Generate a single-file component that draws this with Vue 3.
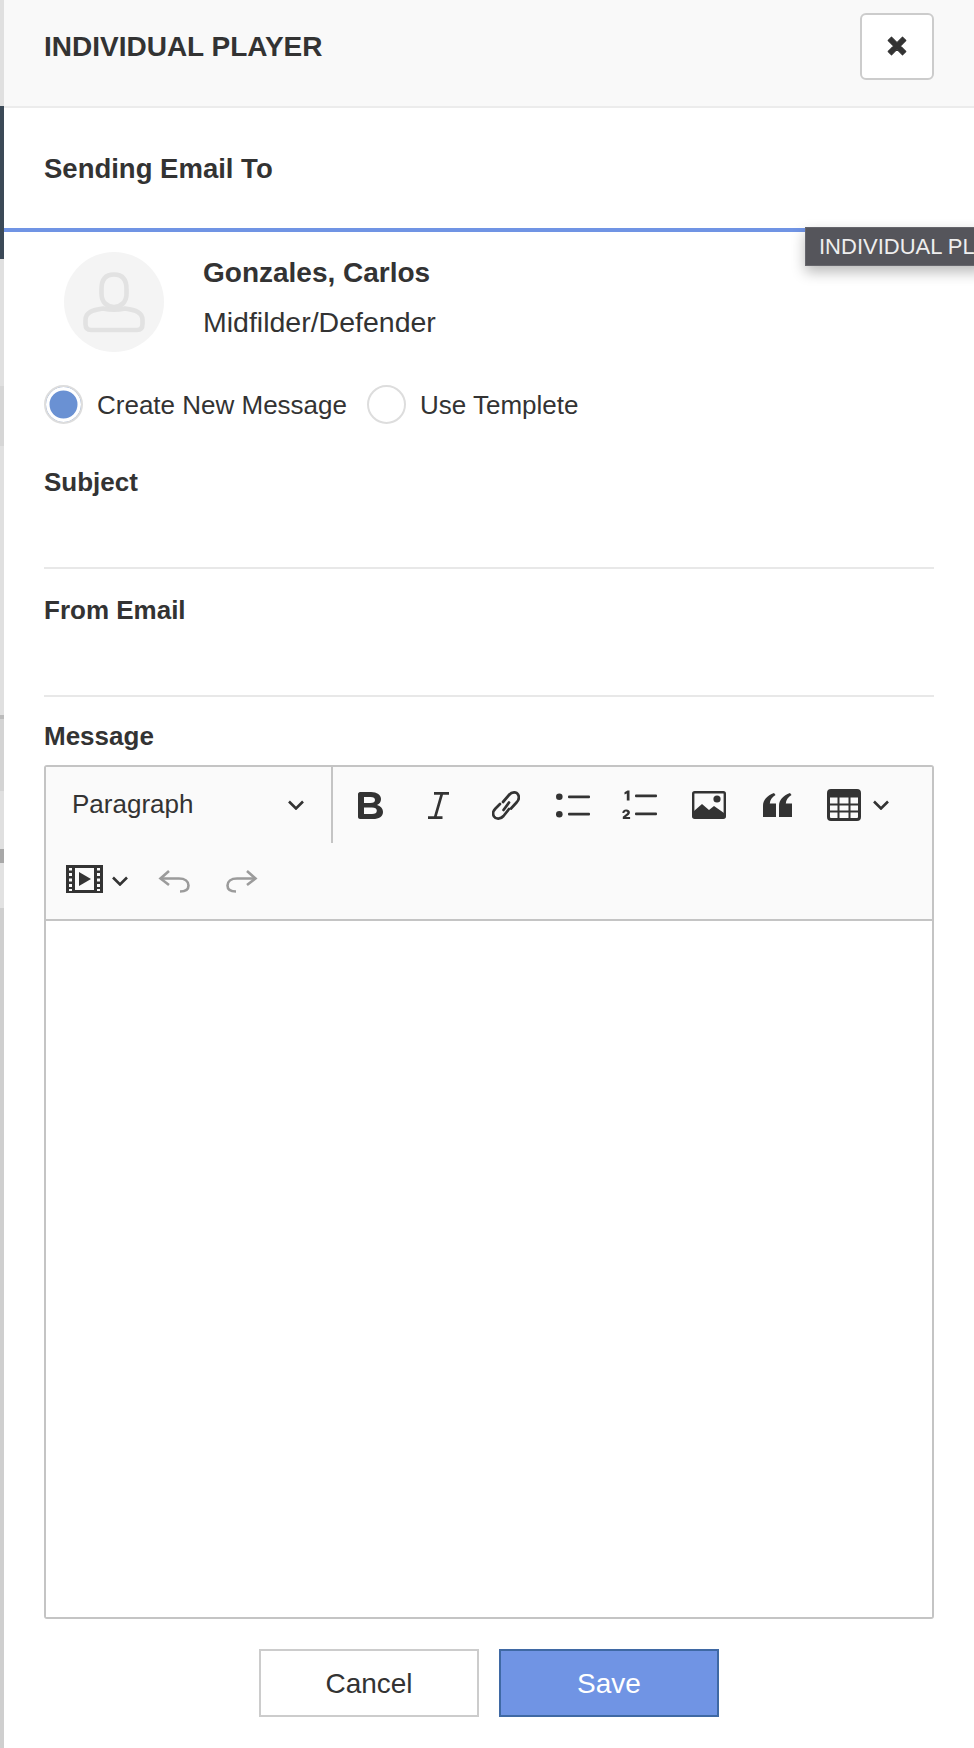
<template>
  <div class="page">
    <div class="backdrop">
      <i v-for="(b, i) in bands" :key="i" :style="{ height: b[0] + 'px', background: b[1] }"></i>
    </div>
    <div class="drawer">
      <header class="head">
        <h1>INDIVIDUAL PLAYER</h1>
        <button class="close" aria-label="Close">
          <svg width="22" height="22" viewBox="0 0 20 20"><path d="M2 5 L5 2 L10 7 L15 2 L18 5 L13 10 L18 15 L15 18 L10 13 L5 18 L2 15 L7 10 Z" fill="#333" stroke="#333" stroke-linejoin="round"/></svg>
        </button>
      </header>

      <div class="sending">
        <h2>Sending Email To</h2>
        <span class="tip">INDIVIDUAL PL</span>
      </div>

      <div class="player">
        <div class="avatar">
          <svg width="100" height="100" viewBox="0 0 100 100" fill="none" stroke="#e2e2e2" stroke-width="4.6" stroke-linejoin="round">
            <path d="M37.5 37 C37.5 27 42 22.5 50 22.5 C58 22.5 62.5 27 62.5 37 V42 C62.5 50 57 55 50 55 C43 55 37.5 50 37.5 42 Z"/>
            <path d="M39 56.5 C28 58 21.5 60.5 21.5 68 V72 C21.5 76 23.5 78 27 78 H73 C76.5 78 78.5 76 78.5 72 V68 C78.5 60.5 72 58 61 56.5 Q50 59 39 56.5 Z"/>
          </svg>
        </div>
        <div class="info">
          <div class="name">Gonzales, Carlos</div>
          <div class="pos">Midfilder/Defender</div>
        </div>
      </div>

      <div class="radios">
        <label class="radio"><span class="dot on"></span>Create New Message</label>
        <label class="radio"><span class="dot"></span>Use Templete</label>
      </div>

      <div class="field first">
        <label>Subject</label>
        <div class="line"></div>
      </div>
      <div class="field">
        <label>From Email</label>
        <div class="line"></div>
      </div>

      <div class="msg">
        <label>Message</label>
        <div class="editor">
          <div class="toolbar">
            <div class="row">
              <div class="select">
                <span>Paragraph</span>
                <svg width="18" height="10" viewBox="0 0 18 10"><path d="M2 1.5 L9 8.5 L16 1.5" fill="none" stroke="#333" stroke-width="2.6"/></svg>
              </div>
              <div class="tools">
                <svg class="i-b" width="25" height="27" viewBox="0 0 25 27"><path d="M2 0 H13 C19 0 23 3 23 7 C23 10 21.5 12 19 13 C22.5 14 25 16.5 25 20 C25 24.5 21 27 15 27 H2 C1 27 0 26 0 25 V2 C0 1 1 0 2 0 Z M6 5 V11 H12.5 C15.5 11 17 9.8 17 8 C17 6 15.5 5 12.5 5 Z M6 15.5 V22 H14 C17 22 18.8 21 18.8 18.8 C18.8 16.6 17 15.5 14 15.5 Z" fill="#333" fill-rule="evenodd"/></svg>
                <svg class="i-i" width="21" height="27" viewBox="0 0 21 27"><path d="M6 1.4 H21 M0 25.6 H14.5 M14 1.4 L7 25.6" fill="none" stroke="#333" stroke-width="2.7"/></svg>
                <svg class="i-link" width="28" height="31" viewBox="0 0 28 31" fill="none" stroke="#333" stroke-width="2.7" stroke-linecap="round"><path d="M11 12 L17 5 C20 1.5 24.5 1.5 26 4.5 C27.5 7 26.8 10 24.5 12.5 L19 18.5"/><path d="M17 19 L11.5 26 C8.5 29.5 4 29.5 2 26.5 C0.5 24 1 21 3.5 18.5 L8 14"/><path d="M11.5 20 L17 12.5"/></svg>
                <svg class="i-ul" width="34" height="25" viewBox="0 0 34 25" fill="#333"><circle cx="3.3" cy="3.8" r="3.3"/><circle cx="3.3" cy="21.2" r="3.3"/><rect x="12" y="2.5" width="22" height="2.7" rx="1"/><rect x="12" y="19.8" width="22" height="2.7" rx="1"/></svg>
                <svg class="i-ol" width="35" height="30" viewBox="0 0 35 30" fill="#333"><path d="M2.5 2.2 L5.5 0.5 H7.5 V10.5 H4.8 V3.6 L2.5 4.6 Z"/><path d="M0.8 29 V26.8 L4.8 23.5 C5.8 22.6 5.5 21.4 4.1 21.4 C2.9 21.4 2.5 22 2.3 23 H0.3 C0.4 20.8 1.9 19.5 4.1 19.5 C6.7 19.5 8.1 21 7.9 22.8 C7.8 24 6.9 24.8 5.9 25.6 L3.9 27 H8.1 V29 Z"/><rect x="13" y="4.5" width="22" height="2.7" rx="1"/><rect x="13" y="22.5" width="22" height="2.7" rx="1"/></svg>
                <svg class="i-img" width="34" height="28" viewBox="0 0 34 28"><rect x="1.2" y="1.2" width="31.6" height="25.6" rx="1.5" fill="none" stroke="#333" stroke-width="2.4"/><circle cx="25" cy="8" r="3.6" fill="#333"/><path d="M2 24 V20 L10 13 L17 19 L22 15 L32 22 V27 H2 Z" fill="#333"/></svg>
                <svg class="i-q" width="29" height="24" viewBox="0 0 29 24" fill="#333"><path d="M0 24 V13 C0 7 4 2.5 11 0 L12.5 2 C9 4 7 7 6.8 10.5 H13 V24 Z"/><path d="M16 24 V13 C16 7 20 2.5 27 0 L28.5 2 C25 4 23 7 22.8 10.5 H29 V24 Z"/></svg>
                <span class="drop i-t">
                  <svg width="34" height="32" viewBox="0 0 34 32"><rect x="1.5" y="1.5" width="31" height="29" rx="2.5" fill="none" stroke="#333" stroke-width="3"/><path d="M1 5.5 H33" stroke="#333" stroke-width="6"/><path d="M2 15.5 H32 M2 22.5 H32 M11.5 8 V30 M22.5 8 V30" stroke="#333" stroke-width="2"/></svg>
                  <svg width="18" height="10" viewBox="0 0 18 10"><path d="M2 1.5 L9 8.5 L16 1.5" fill="none" stroke="#333" stroke-width="2.6"/></svg>
                </span>
              </div>
            </div>
            <div class="row second">
              <span class="drop">
                <svg width="37" height="28" viewBox="0 0 37 28"><path d="M0 0 H37 V28 H0 Z M3 3 V5.5 H6 V3 Z M3 8 V11 H6 V8 Z M3 13.5 V16.5 H6 V13.5 Z M3 19 V22 H6 V19 Z M3 24 V26 H6 V24 Z M31 3 V5.5 H34 V3 Z M31 8 V11 H34 V8 Z M31 13.5 V16.5 H34 V13.5 Z M31 19 V22 H34 V19 Z M31 24 V26 H34 V24 Z M9 3 V25 H28 V3 Z" fill="#333" fill-rule="evenodd"/><path d="M13 7 L25 14 L13 21 Z" fill="#333"/></svg>
                <svg class="low" width="18" height="10" viewBox="0 0 18 10"><path d="M2 1.5 L9 8.5 L16 1.5" fill="none" stroke="#333" stroke-width="2.6"/></svg>
              </span>
              <svg class="undo" width="32" height="24" viewBox="0 0 32 24" fill="none" stroke="#9b9b9b" stroke-width="2.6"><path d="M11 2 L2.5 9.5 L11 16"/><path d="M3 9.5 H21 C27 9.5 30.5 12.5 30.5 16.5 C30.5 20 28 22.5 22 22.5"/></svg>
              <svg class="redo" width="32" height="24" viewBox="0 0 32 24" fill="none" stroke="#9b9b9b" stroke-width="2.6"><path d="M21 2 L29.5 9.5 L21 16"/><path d="M29 9.5 H11 C5 9.5 1.5 12.5 1.5 16.5 C1.5 20 4 22.5 10 22.5"/></svg>
            </div>
          </div>
          <div class="body"></div>
        </div>
      </div>

      <div class="actions">
        <button class="btn">Cancel</button>
        <button class="btn save">Save</button>
      </div>
    </div>
  </div>
</template>

<script setup>
// slivers of the page behind the drawer: [height, colour]
const bands = [
  [106, '#e0e0e0'],
  [153, '#3b4957'],
  [127, '#e0e0e0'],
  [60, '#d6d6d6'],
  [269, '#e0e0e0'],
  [4, '#bbbbbb'],
  [72, '#d4d4d4'],
  [58, '#e0e0e0'],
  [14, '#a8a8a8'],
  [45, '#e2e2e2'],
  [840, '#cfcfcf'],
]
</script>

<style>
html, body {
  margin: 0;
  background: #fff;
}
</style>

<style scoped>
.page {
  position: relative;
  width: 974px;
  height: 1748px;
  overflow: hidden;
  display: flex;
  font-family: "Liberation Sans", Arial, sans-serif;
  color: #333;
}
.backdrop {
  width: 4px;
  flex: none;
}
.backdrop i {
  display: block;
}
.drawer {
  flex: 1;
  display: flex;
  flex-direction: column;
  min-width: 0;
  background: #fff;
}
.head {
  height: 92px;
  background: #f9f9f9;
  border-bottom: 2px solid #ececec;
  display: flex;
  align-items: center;
  justify-content: space-between;
  padding: 0 40px 14px 40px;
}
h1 {
  margin: 2px 0 0;
  font-size: 28px;
  font-weight: 700;
}
.close {
  width: 74px;
  height: 67px;
  border: 2px solid #ccc;
  border-radius: 6px;
  background: #fff;
  display: flex;
  align-items: center;
  justify-content: center;
  padding: 0;
}
.sending {
  position: relative;
  height: 120px;
  border-bottom: 4px solid #7094e4;
  display: flex;
  align-items: center;
  padding-left: 40px;
}
h2 {
  margin: 2px 0 0;
  font-size: 27.5px;
  font-weight: 700;
}
.tip {
  position: absolute;
  left: 801px;
  top: 119px;
  width: 180px;
  height: 39px;
  box-sizing: border-box;
  padding-left: 13px;
  line-height: 37px;
  background: #55555b;
  color: #eee;
  font-size: 22px;
  white-space: nowrap;
  box-shadow: 0 6px 14px rgba(0, 0, 0, 0.28);
  border: 1px solid #66666c;
}
.player {
  display: flex;
  padding: 20px 0 0 60px;
}
.avatar {
  width: 100px;
  height: 100px;
  border-radius: 50%;
  background: #f4f4f4;
}
.avatar svg {
  display: block;
}
.info {
  margin-left: 39px;
}
.name {
  font-size: 28px;
  font-weight: 700;
  line-height: 30px;
  margin-top: 6px;
}
.pos {
  font-size: 28.5px;
  line-height: 30px;
  margin-top: 19px;
}
.radios {
  display: flex;
  gap: 20px;
  padding: 33px 0 0 40px;
}
.radio {
  display: flex;
  align-items: center;
  font-size: 26px;
  gap: 14px;
}
.dot {
  width: 39px;
  height: 39px;
  margin-bottom: 2px;
  box-sizing: border-box;
  border: 2px solid #ddd;
  border-radius: 50%;
  background: #fff;
}
.dot.on {
  background: #6a91d3;
  box-shadow: inset 0 0 0 3.5px #fff;
}
.field {
  padding: 0 40px;
}
.field.first {
  margin-top: 41px;
}
.field label, .msg label {
  display: block;
  font-size: 26px;
  font-weight: 700;
  line-height: 30px;
}
.line {
  height: 70px;
  border-bottom: 2px solid #e8e8e8;
  margin-bottom: 26px;
}
.msg {
  padding: 0 40px;
  margin-top: -2px;
}
.editor {
  margin-top: 14px;
  border: 2px solid #c4c4c4;
  border-radius: 3px;
  height: 854px;
  box-sizing: border-box;
  display: flex;
  flex-direction: column;
  background: #fff;
}
.toolbar {
  background: #fafafa;
  border-bottom: 2px solid #c4c4c4;
  height: 152px;
  flex: none;
}
.row {
  display: flex;
  align-items: center;
}
.select {
  width: 287px;
  height: 76px;
  box-sizing: border-box;
  border-right: 2px solid #c4c4c4;
  display: flex;
  align-items: center;
  justify-content: space-between;
  padding: 0 26px 0 26px;
  font-size: 26px;
  flex: none;
}
.select span {
  margin-bottom: 2px;
}
.tools {
  flex: 1;
  display: flex;
  align-items: center;
  padding-left: 25px;
}
.tools svg {
  flex: none;
}
.i-i { margin-left: 45px; }
.i-link { margin-left: 43px; }
.i-ul { margin-left: 36px; }
.i-ol { margin-left: 32px; }
.i-img { margin-left: 35px; }
.i-q { margin-left: 37px; }
.i-t { margin-left: 35px; }
.drop {
  display: flex;
  align-items: center;
  gap: 11px;
}
.second {
  height: 72px;
  padding-left: 20px;
}
.second .drop {
  gap: 8px;
}
.low {
  margin-top: 4px;
}
.undo {
  margin: 4px 0 0 29px;
}
.redo {
  margin: 4px 0 0 36px;
}
.body {
  flex: 1;
  background: #fff;
}
.actions {
  display: flex;
  justify-content: center;
  gap: 20px;
  margin-top: 30px;
}
.btn {
  width: 220px;
  height: 68px;
  border: 2px solid #ccc;
  background: #fff;
  color: #333;
  font-family: inherit;
  font-size: 28px;
  padding: 2px 0 0;
}
.btn.save {
  background: #7094e4;
  border-color: #3f69a4;
  color: #fff;
}
</style>
